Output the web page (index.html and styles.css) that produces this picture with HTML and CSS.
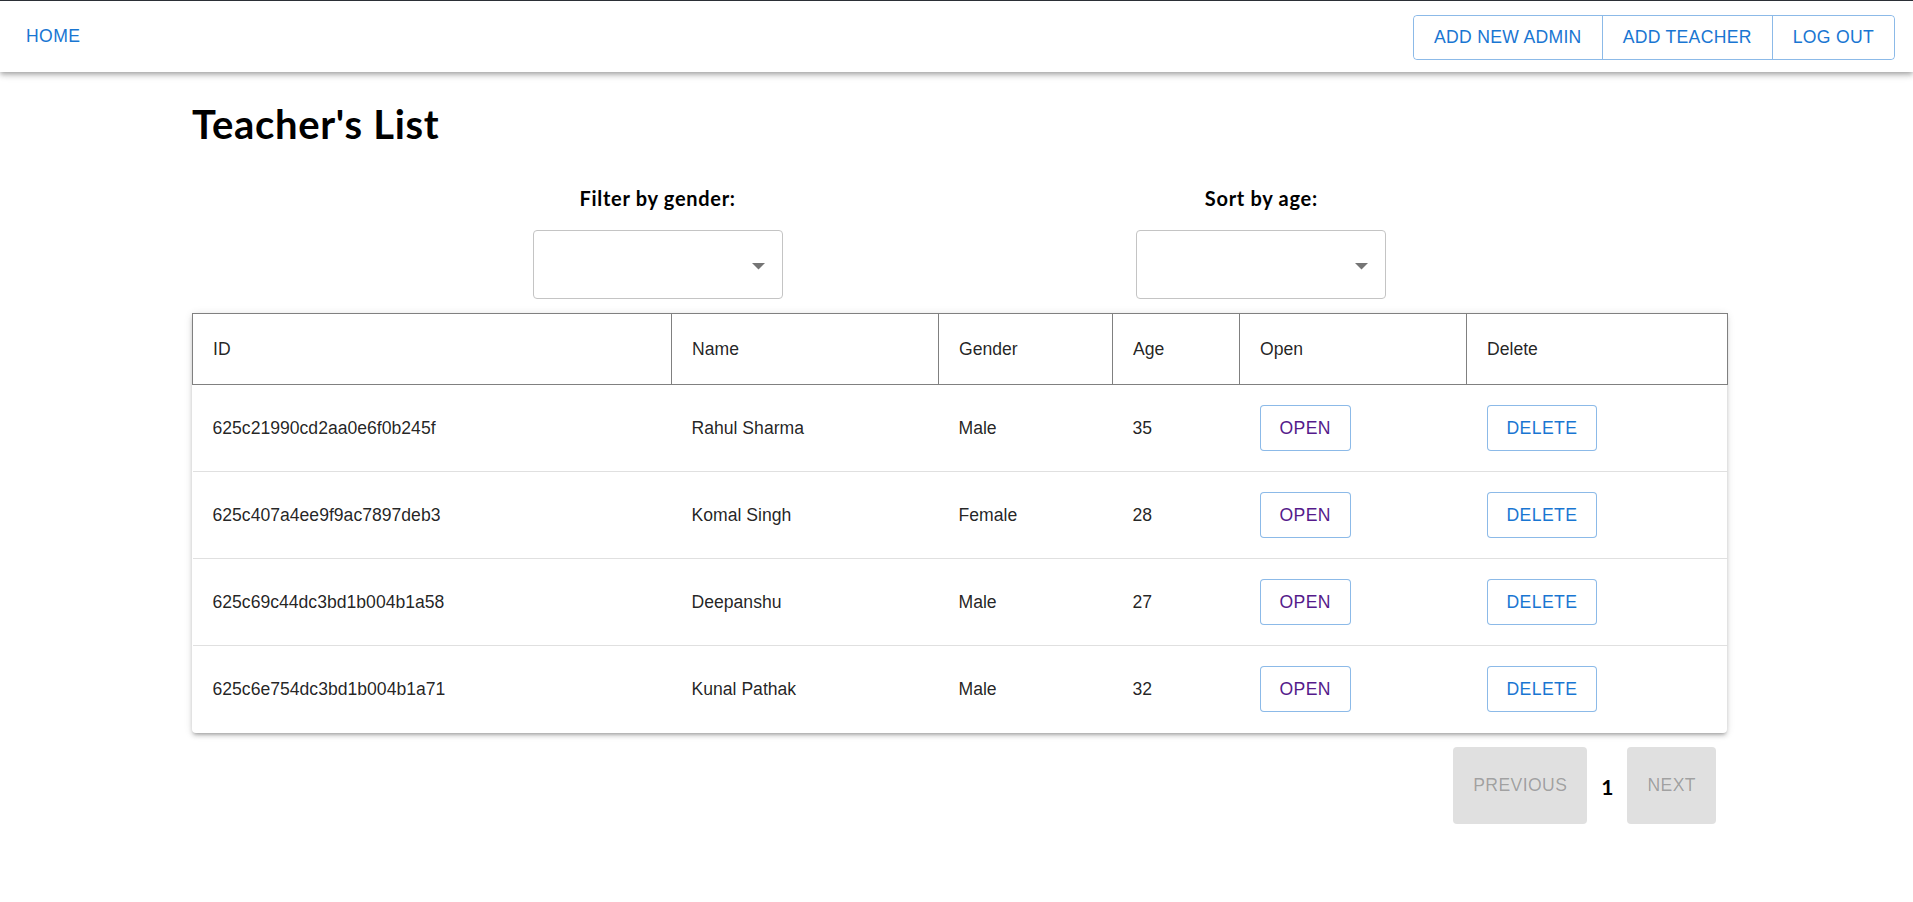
FILE: index.html
```html
<!DOCTYPE html>
<html lang="en">
<head>
<meta charset="utf-8">
<title>Teacher's List</title>
<link rel="stylesheet" href="styles.css">
</head>
<body>
<header class="topbar">
  <a class="nav-link" href="#">HOME</a>
  <div class="btn-group">
    <button class="group-btn">ADD NEW ADMIN</button>
    <button class="group-btn">ADD TEACHER</button>
    <button class="group-btn">LOG OUT</button>
  </div>
</header>
<main class="page">
  <h1 class="title">Teacher's List</h1>
  <div class="filters">
    <div class="filter">
      <div class="filter-label">Filter by gender:</div>
      <div class="select">
        <svg class="arrow" width="13" height="7" viewBox="0 0 13 7"><path d="M0 0 L13 0 L6.5 6.5 Z" fill="rgba(0,0,0,0.54)"/></svg>
      </div>
    </div>
    <div class="filter">
      <div class="filter-label">Sort by age:</div>
      <div class="select">
        <svg class="arrow" width="13" height="7" viewBox="0 0 13 7"><path d="M0 0 L13 0 L6.5 6.5 Z" fill="rgba(0,0,0,0.54)"/></svg>
      </div>
    </div>
  </div>
  <div class="paper">
    <table class="grid">
      <colgroup>
        <col class="c-id"><col class="c-name"><col class="c-gender"><col class="c-age"><col class="c-open"><col class="c-del">
      </colgroup>
      <thead>
        <tr><th>ID</th><th>Name</th><th>Gender</th><th>Age</th><th>Open</th><th>Delete</th></tr>
      </thead>
      <tbody>
        <tr><td>625c21990cd2aa0e6f0b245f</td><td>Rahul Sharma</td><td>Male</td><td>35</td><td><button class="row-btn open">OPEN</button></td><td><button class="row-btn">DELETE</button></td></tr>
        <tr><td>625c407a4ee9f9ac7897deb3</td><td>Komal Singh</td><td>Female</td><td>28</td><td><button class="row-btn open">OPEN</button></td><td><button class="row-btn">DELETE</button></td></tr>
        <tr><td>625c69c44dc3bd1b004b1a58</td><td>Deepanshu</td><td>Male</td><td>27</td><td><button class="row-btn open">OPEN</button></td><td><button class="row-btn">DELETE</button></td></tr>
        <tr><td>625c6e754dc3bd1b004b1a71</td><td>Kunal Pathak</td><td>Male</td><td>32</td><td><button class="row-btn open">OPEN</button></td><td><button class="row-btn">DELETE</button></td></tr>
      </tbody>
    </table>
  </div>
  <div class="pagination">
    <button class="page-btn" disabled>PREVIOUS</button>
    <span class="page-num">1</span>
    <button class="page-btn" disabled>NEXT</button>
  </div>
</main>
</body>
</html>
```
FILE: styles.css
```css
* { box-sizing: border-box; }
body {
  margin: 0;
  font-family: "Liberation Sans", Arial, sans-serif;
  color: rgba(0,0,0,0.87);
  background: #fff;
}
.topbar {
  height: 72px;
  border-top: 1px solid #2b2f36;
  background: #fff;
  display: flex;
  align-items: center;
  justify-content: space-between;
  padding: 0 18px;
  box-shadow: 0 2px 4px -1px rgba(0,0,0,0.2), 0 4px 5px 0 rgba(0,0,0,0.14), 0 1px 10px 0 rgba(0,0,0,0.12);
  position: relative;
}
.nav-link {
  color: #1976d2;
  text-decoration: none;
  font-size: 17.6px;
  letter-spacing: 0.4px;
  padding: 6px 8px;
  margin-top: 0;
}
.btn-group {
  display: flex;
  border: 1px solid rgba(25,118,210,0.5);
  border-radius: 4px;
  height: 45px;
  margin-top: 1px;
}
.group-btn {
  font-family: "Liberation Sans", Arial, sans-serif;
  font-size: 17.6px;
  letter-spacing: 0.3px;
  color: #1976d2;
  background: #fff;
  border: 0;
  border-right: 1px solid rgba(25,118,210,0.5);
  padding: 0 20px;
  border-radius: 0;
}
.group-btn:first-child { border-radius: 4px 0 0 4px; }
.group-btn:last-child { border-right: 0; border-radius: 0 4px 4px 0; }

.page {
  margin-left: 192px;
  width: 1535px;
}
.title {
  font-family: Lato, "Open Sans", sans-serif;
  font-weight: 700;
  font-size: 40px;
  line-height: 48px;
  margin: 28px 0 0 0;
  color: #000;
  letter-spacing: 0.7px;
}
.filters {
  display: flex;
  justify-content: space-evenly;
  margin-top: 38px;
}
.filter {
  width: 276px;
  display: flex;
  flex-direction: column;
  align-items: center;
}
.filter-label {
  font-family: Lato, "Open Sans", sans-serif;
  font-weight: 700;
  font-size: 20px;
  line-height: 24px;
  letter-spacing: 0.7px;
  color: #000;
}
.select {
  margin-top: 20px;
  width: 250px;
  height: 69px;
  border: 1px solid #c4c4c4;
  border-radius: 4px;
  display: flex;
  align-items: center;
  justify-content: flex-end;
  padding: 3px 17px 0 0;
}
.paper {
  margin-top: 14px;
  background: #fff;
  border-radius: 4px;
  box-shadow: 0 3px 3px -2px rgba(0,0,0,0.2), 0 3px 4px 0 rgba(0,0,0,0.14), 0 1px 8px 0 rgba(0,0,0,0.12);
}
.grid {
  width: 100%;
  border-collapse: collapse;
  table-layout: fixed;
  font-size: 17.6px;
}
.c-id { width: 479px; }
.c-name { width: 267px; }
.c-gender { width: 174px; }
.c-age { width: 127px; }
.c-open { width: 227px; }
.c-del { width: 261px; }
.grid th {
  border: 1px solid #808080;
  height: 71px;
  padding: 0 20px;
  text-align: left;
  font-weight: 400;
  color: rgba(0,0,0,0.87);
}
.grid td {
  height: 87px;
  padding: 0 20px;
  border-bottom: 1px solid #e0e0e0;
  color: rgba(0,0,0,0.87);
}
.grid tbody tr:last-child td { border-bottom: 0; }
.row-btn {
  font-family: "Liberation Sans", Arial, sans-serif;
  font-size: 17.6px;
  letter-spacing: 0.4px;
  height: 46px;
  padding: 0 19px;
  background: #fff;
  color: #1976d2;
  border: 1px solid rgba(25,118,210,0.5);
  border-radius: 4px;
}
.row-btn.open { color: #551a8b; }
.pagination {
  display: flex;
  justify-content: flex-end;
  align-items: center;
  margin-top: 14px;
  padding-right: 11px;
}
.page-btn {
  font-family: "Liberation Sans", Arial, sans-serif;
  font-size: 17.6px;
  letter-spacing: 0.4px;
  height: 77px;
  padding: 0 20px;
  background: #e0e0e0;
  color: rgba(0,0,0,0.3);
  border: 0;
  border-radius: 4px;
}
.page-num {
  font-family: Lato, "Open Sans", sans-serif;
  font-weight: 700;
  font-size: 21px;
  margin: 2px 14px 0 14px;
  color: #000;
}
```
